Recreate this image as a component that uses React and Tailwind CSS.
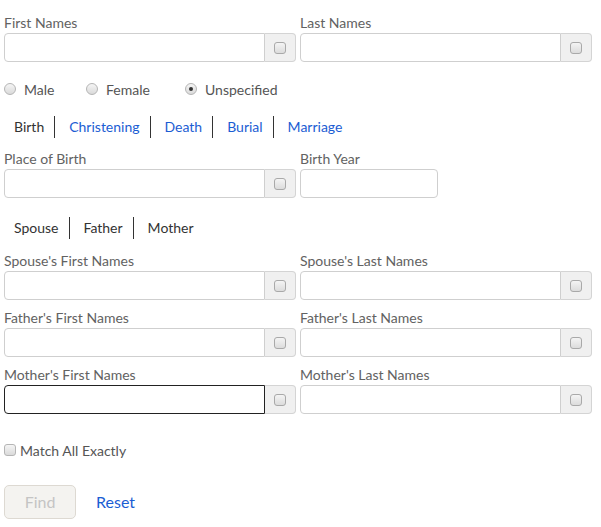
import React, { useState } from 'react';

// little grey checkbox that sits in the input addon
const MiniCheck = () => (
  <span className="block w-[12px] h-[12px] rounded-[3px] border border-[#a9a9a9] bg-gradient-to-b from-[#f4f4f4] to-[#dcdcdc]" />
);

const NameField = ({ label, focused }) => (
  <div className="flex flex-col">
    <label className="h-5 leading-5 text-[14px] text-[#626262]">{label}</label>
    <div className="flex h-[29px]">
      <input
        className={`flex-1 min-w-0 rounded-l-[4px] border bg-white outline-none ${
          focused ? 'border-[#222]' : 'border-[#cfcfcf]'
        }`}
      />
      <div className="w-[31px] flex items-center justify-center bg-[#f0f0f0] border border-l-0 border-[#d4d4d4] rounded-r-[4px]">
        <MiniCheck />
      </div>
    </div>
  </div>
);

const Radio = ({ label, checked }) => (
  <label className="flex items-center gap-2 text-[14px] text-[#555]">
    <span className="w-[12px] h-[12px] rounded-full border border-[#b5b5b5] bg-gradient-to-b from-[#f5f5f5] to-[#dadada] flex items-center justify-center">
      {checked && <span className="w-[4px] h-[4px] rounded-full bg-[#333]" />}
    </span>
    {label}
  </label>
);

// plain tabs separated by thin rules; links unless active / plain
const Tabs = ({ items, active, plain }) => (
  <div className="flex items-center pl-[10px]">
    {items.map((item, i) => (
      <span
        key={item}
        className={`h-[22px] leading-[22px] text-[14px] ${i === 0 ? 'pr-[10px]' : 'pl-[14px] pr-[10px]'} ${
          i < items.length - 1 ? 'border-r border-[#333]' : ''
        } ${plain || item === active ? 'text-[#333]' : 'text-[#1b5dd3]'}`}
      >
        {item}
      </span>
    ))}
  </div>
);

export default function App() {
  const [gender] = useState('Unspecified');

  return (
    <div className="w-[601px] h-[527px] bg-white pl-1 pt-[13px] font-['Lato',sans-serif]">
      <div className="w-[588px] grid grid-cols-2 gap-x-1">
        <NameField label="First Names" />
        <NameField label="Last Names" />
      </div>

      {/* gender */}
      <div className="flex items-center h-5 mt-[17px]">
        <div className="w-[82px]"><Radio label="Male" checked={gender === 'Male'} /></div>
        <div className="w-[99px]"><Radio label="Female" checked={gender === 'Female'} /></div>
        <Radio label="Unspecified" checked={gender === 'Unspecified'} />
      </div>

      {/* event tabs */}
      <div className="mt-[17px]">
        <Tabs items={['Birth', 'Christening', 'Death', 'Burial', 'Marriage']} active="Birth" />
      </div>

      <div className="mt-[11px] w-[588px] grid grid-cols-2 gap-x-1">
        <NameField label="Place of Birth" />
        <div className="flex flex-col">
          <label className="h-5 leading-5 text-[14px] text-[#626262]">Birth Year</label>
          <input className="w-[138px] h-[29px] rounded-[4px] border border-[#cfcfcf] outline-none" />
        </div>
      </div>

      {/* relatives tabs */}
      <div className="mt-[19px]">
        <Tabs items={['Spouse', 'Father', 'Mother']} plain />
      </div>

      <div className="mt-[12px] w-[588px] grid grid-cols-2 gap-x-1 gap-y-[8px]">
        <NameField label="Spouse's First Names" />
        <NameField label="Spouse's Last Names" />
        <NameField label="Father's First Names" />
        <NameField label="Father's Last Names" />
        <NameField label="Mother's First Names" focused />
        <NameField label="Mother's Last Names" />
      </div>

      <label className="mt-[26px] flex items-center gap-[4px] h-5 text-[14px] text-[#555]">
        <span className="w-[12px] h-[12px] rounded-[3px] border border-[#b5b5b5] bg-gradient-to-b from-[#f5f5f5] to-[#dadada]" />
        Match All Exactly
      </label>

      <div className="mt-[25px] flex items-center gap-5">
        <button className="w-[72px] h-[34px] rounded-[5px] border border-[#ddd9d2] bg-[#f4f3f0] text-[16px] text-[#c4c4c4]">
          Find
        </button>
        <a className="text-[16px] text-[#1b5dd3]">Reset</a>
      </div>
    </div>
  );
}
